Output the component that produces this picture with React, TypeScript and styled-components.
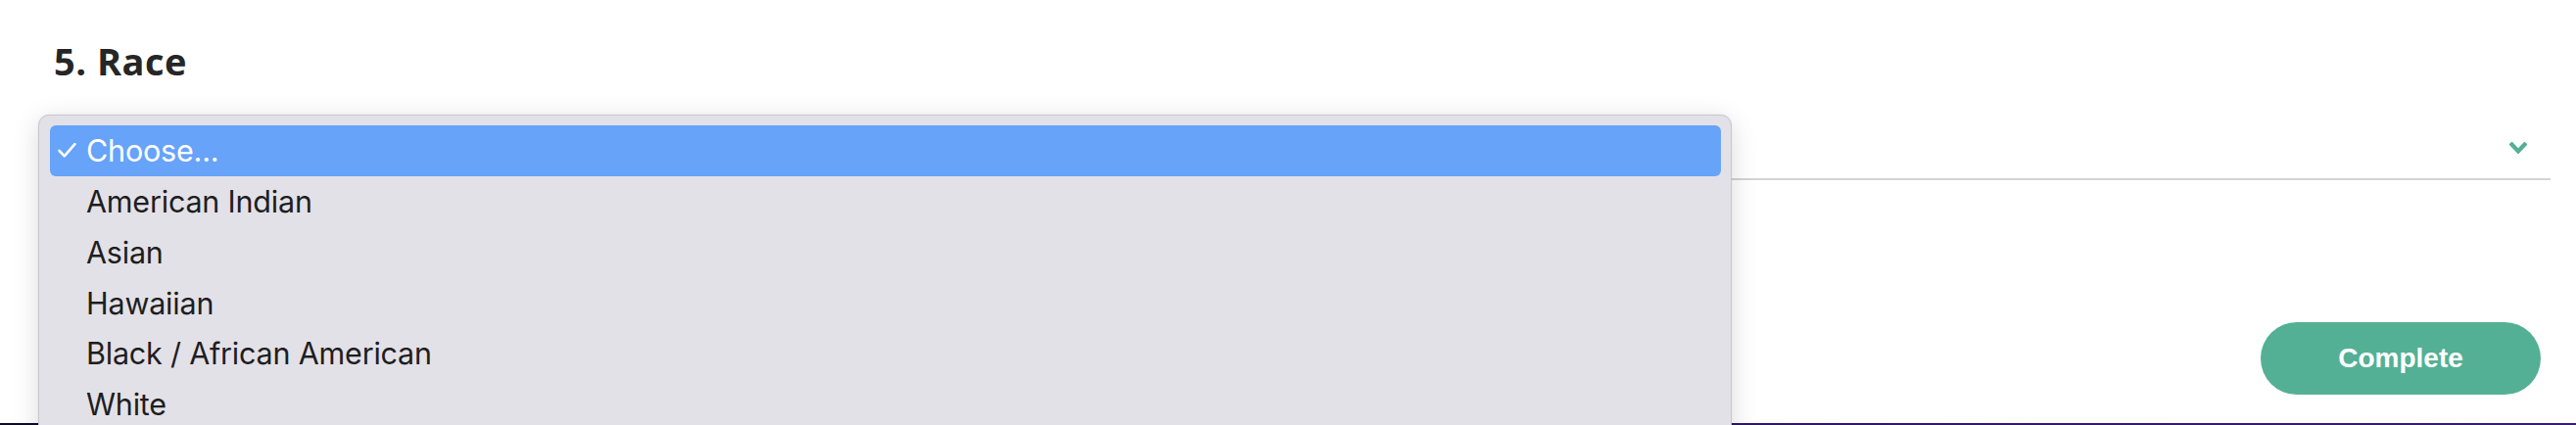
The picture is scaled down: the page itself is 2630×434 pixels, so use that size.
import React from "react";
import styled, { createGlobalStyle } from "styled-components";

const GlobalStyle = createGlobalStyle`
  html, body {
    margin: 0;
    padding: 0;
    background: #ffffff;
    overflow: hidden;
  }
  #root {
    position: relative;
    width: 2630px;
    height: 434px;
  }
`;

const Page = styled.div`
  position: relative;
  height: 434px;
  display: flex;
  flex-direction: column;
  box-sizing: border-box;
`;

const Content = styled.div`
  flex: 1;
  display: flex;
  flex-direction: column;
  padding: 38px 26px 0 55px;
`;

const Heading = styled.h2`
  margin: 0;
  font-family: "Open Sans", "Lato", sans-serif;
  font-weight: 700;
  font-size: 38px;
  line-height: 48px;
  letter-spacing: 0.5px;
  color: #262626;
`;

const SelectField = styled.div`
  margin-top: 48px;
  height: 50px;
  box-sizing: border-box;
  padding: 11px 24px 0 0;
  display: flex;
  align-items: flex-start;
  justify-content: space-between;
  border-bottom: 2px solid #d3d3d3;
`;

const SelectValue = styled.span`
  font-family: "Lato", sans-serif;
  font-size: 28px;
  color: #2a2a2a;
`;

const Footer = styled.div`
  display: flex;
  justify-content: flex-end;
  margin-top: 145px;
  padding-right: 10px;
`;

const Button = styled.button`
  width: 286px;
  height: 74px;
  border: none;
  border-radius: 37px;
  background: #54b095;
  color: #ffffff;
  font-family: "Liberation Sans", Arial, sans-serif;
  font-weight: 700;
  font-size: 28px;
  cursor: pointer;
`;

const BottomBar = styled.div`
  height: 2px;
  background: linear-gradient(90deg, #0e0a28 0%, #2a1660 50%, #3a1c74 100%);
`;

const Popup = styled.div`
  position: absolute;
  left: 39px;
  top: 117px;
  width: 1729px;
  box-sizing: border-box;
  padding: 10px 10px 10px 11px;
  background: #e3e1e8;
  border: 1px solid #c9c7cd;
  border-radius: 11px;
  box-shadow: 0 6px 28px rgba(0, 0, 0, 0.14), 0 0 2px rgba(0, 0, 0, 0.08);
`;

const Option = styled.div<{ $selected?: boolean }>`
  height: 51.75px;
  display: flex;
  align-items: center;
  border-radius: 6px;
  background: ${(p) => (p.$selected ? "#66a3f9" : "transparent")};
  color: ${(p) => (p.$selected ? "#ffffff" : "#1e1e1e")};
  font-family: "Inter", "Noto Sans", sans-serif;
  font-size: 30.5px;
  letter-spacing: -0.2px;
`;

const CheckSlot = styled.span`
  width: 37px;
  flex: none;
  display: flex;
  justify-content: flex-start;
  align-items: center;
  padding-left: 8px;
  box-sizing: border-box;
`;

const Check = () => (
  <svg width="19" height="15" viewBox="0 0 19 15" fill="none">
    <path d="M1.6 8 L6.8 13.3 L17.4 1.2" stroke="#ffffff" strokeWidth="2.6" strokeLinecap="round" strokeLinejoin="round" />
  </svg>
);

const Chevron = () => (
  <svg width="18" height="13" viewBox="0 0 18 13" fill="none">
    <path d="M2.5 2.5 L9 9.5 L15.5 2.5" stroke="#54b095" strokeWidth="4.2" strokeLinecap="square" />
  </svg>
);

const options = [
  "Choose...",
  "American Indian",
  "Asian",
  "Hawaiian",
  "Black / African American",
  "White",
  "Other",
];

export default function App() {
  return (
    <>
      <GlobalStyle />
      <Page>
        <Content>
          <Heading>5. Race</Heading>
          <SelectField>
            <SelectValue>Choose...</SelectValue>
            <Chevron />
          </SelectField>
          <Footer>
            <Button>Complete</Button>
          </Footer>
        </Content>
        <BottomBar />
        <Popup>
          {options.map((o, i) => (
            <Option key={o} $selected={i === 0}>
              <CheckSlot>{i === 0 ? <Check /> : null}</CheckSlot>
              {o}
            </Option>
          ))}
        </Popup>
      </Page>
    </>
  );
}
